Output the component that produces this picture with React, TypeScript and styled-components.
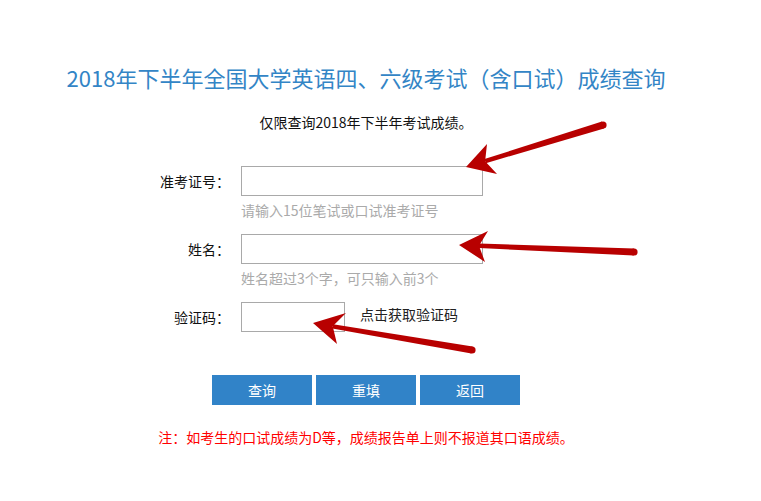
import React from "react";
import styled, { createGlobalStyle } from "styled-components";

const Global = createGlobalStyle`
  html, body { margin: 0; padding: 0; background: #fff; }
  body { font-family: "Noto Sans CJK SC", "Noto Sans", sans-serif; color: #222; }
  * { box-sizing: border-box; }
`;

const Page = styled.div`
  position: relative;
  width: 761px;
  height: 501px;
  overflow: hidden;
`;

const Content = styled.div`
  width: 732px;
  padding-top: 62px;
  display: flex;
  flex-direction: column;
  align-items: center;
`;

const Title = styled.h1`
  margin: 0;
  font-size: 22px;
  line-height: 30px;
  font-weight: normal;
  color: #3385c6;
  white-space: nowrap;
`;

const Subtitle = styled.p`
  margin: 20px 0 0;
  font-size: 14px;
  line-height: 20px;
  color: #111;
`;

const Form = styled.form`
  align-self: stretch;
  margin-top: 34px;
  display: flex;
  flex-direction: column;
`;

const Row = styled.div<{ $gap: number }>`
  display: grid;
  grid-template-columns: 230px auto;
  column-gap: 11px;
  align-items: start;
  margin-bottom: ${(p) => p.$gap}px;
`;

const Label = styled.label`
  text-align: right;
  font-size: 14px;
  line-height: 30px;
  color: #111;
`;

const Field = styled.div`
  display: flex;
  flex-direction: column;
`;

const Inline = styled.div`
  display: flex;
  align-items: center;
  gap: 15px;
`;

const Input = styled.input<{ $w: number }>`
  width: ${(p) => p.$w}px;
  height: 30px;
  border: 1px solid #a9a9a9;
  padding: 0 6px;
  font-size: 14px;
  outline: none;
  background: #fff;
`;

const Hint = styled.div`
  margin-top: 5px;
  font-size: 14px;
  line-height: 18px;
  color: #aaaaaa;
`;

const Link = styled.span`
  font-size: 14px;
  line-height: 20px;
  margin-top: -6px;
  color: #222;
  cursor: pointer;
`;

const Buttons = styled.div`
  display: flex;
  justify-content: center;
  gap: 4px;
  padding-left: 0;
`;

const Button = styled.button`
  width: 100px;
  height: 30px;
  border: none;
  background: #3183c8;
  color: #fff;
  font-family: inherit;
  font-size: 14px;
  cursor: pointer;
  padding: 0;
`;

const Note = styled.p`
  margin: 22px 0 0;
  font-size: 14px;
  line-height: 20px;
  color: #ff0000;
  text-align: center;
`;

const Overlay = styled.svg`
  position: absolute;
  left: 0;
  top: 0;
  pointer-events: none;
`;

type Arrow = {
  tip: [number, number];
  tail: [number, number];
  w1: [number, number];
  w2: [number, number];
};

const arrows: Arrow[] = [
  { tip: [466, 167], tail: [603, 125], w1: [487, 144], w2: [497, 174] },
  { tip: [459, 245], tail: [634, 252], w1: [488, 231], w2: [485, 262] },
  { tip: [313, 323], tail: [472, 350], w1: [346, 313], w2: [337, 344] },
];

function ArrowShape({ a }: { a: Arrow }) {
  const dx = a.tail[0] - a.tip[0];
  const dy = a.tail[1] - a.tip[1];
  const len = Math.hypot(dx, dy);
  const ux = dx / len;
  const uy = dy / len;
  const nx = a.tip[0] + ux * 20;
  const ny = a.tip[1] + uy * 20;
  // tapered shaft
  const px = -uy;
  const py = ux;
  const w0 = 2.2;
  const w1 = 3.6;
  const shaft = [
    [nx + px * w0, ny + py * w0],
    [a.tail[0] + px * w1, a.tail[1] + py * w1],
    [a.tail[0] - px * w1, a.tail[1] - py * w1],
    [nx - px * w0, ny - py * w0],
  ]
    .map((p) => p.join(","))
    .join(" ");
  const head = [a.tip, a.w1, [nx, ny], a.w2].map((p) => p.join(",")).join(" ");
  return (
    <g fill="#b80000">
      <polygon points={shaft} />
      <circle cx={a.tail[0]} cy={a.tail[1]} r={w1} />
      <polygon points={head} />
    </g>
  );
}

export default function App() {
  return (
    <Page>
      <Global />
      <Content>
        <Title>2018年下半年全国大学英语四、六级考试（含口试）成绩查询</Title>
        <Subtitle>仅限查询2018年下半年考试成绩。</Subtitle>
        <Form onSubmit={(e) => e.preventDefault()}>
          <Row $gap={15}>
            <Label>准考证号：</Label>
            <Field>
              <Input $w={242} />
              <Hint>请输入15位笔试或口试准考证号</Hint>
            </Field>
          </Row>
          <Row $gap={15}>
            <Label>姓名：</Label>
            <Field>
              <Input $w={242} />
              <Hint>姓名超过3个字，可只输入前3个</Hint>
            </Field>
          </Row>
          <Row $gap={43}>
            <Label>验证码：</Label>
            <Inline>
              <Input $w={104} />
              <Link>点击获取验证码</Link>
            </Inline>
          </Row>
          <Buttons>
            <Button type="button">查询</Button>
            <Button type="button">重填</Button>
            <Button type="button">返回</Button>
          </Buttons>
        </Form>
        <Note>注：如考生的口试成绩为D等，成绩报告单上则不报道其口语成绩。</Note>
      </Content>
      <Overlay width={761} height={501} viewBox="0 0 761 501">
        {arrows.map((a, i) => (
          <ArrowShape key={i} a={a} />
        ))}
      </Overlay>
    </Page>
  );
}
